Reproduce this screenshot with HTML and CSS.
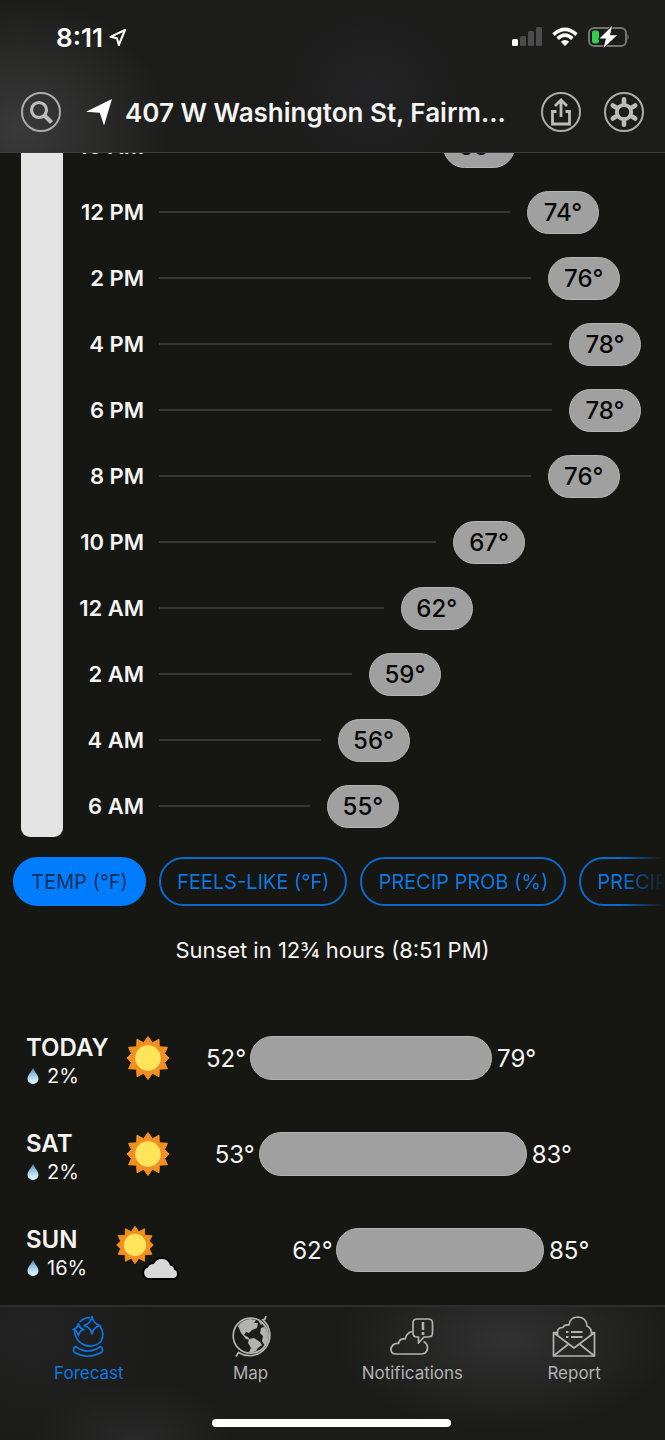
FILE: index.html
```html
<!DOCTYPE html>
<html lang="en">
<head>
<meta charset="utf-8">
<meta name="viewport" content="width=device-width, initial-scale=1">
<title>Forecast</title>
<link rel="stylesheet" href="styles.css">
</head>
<body>
<svg class="defs" aria-hidden="true">
  <defs>
    <linearGradient id="drop-fill" x1="0" y1="0" x2="0" y2="1"><stop offset="0" stop-color="#4f86b4"/><stop offset=".5" stop-color="#a5d2ee"/><stop offset="1" stop-color="#eefaff"/></linearGradient>
    <symbol id="sun" viewBox="0 0 44 46">
      <path fill="#f28f20" stroke="#f28f20" stroke-width="1" stroke-linejoin="round" d="M22 1.500 L26.400 7.800 L33 4.200 L33.300 11.800 L41.500 12.300 L38.500 18.500 L43 23 L38.500 27.500 L41.500 33.700 L33.300 34.200 L33 41.800 L26.400 38.200 L22 44.500 L17.600 38.200 L11 41.800 L10.700 34.200 L2.500 33.700 L5.500 27.500 L1 23 L5.500 18.500 L2.500 12.300 L10.700 11.800 L11 4.200 L17.600 7.800 Z"/>
      <circle cx="22" cy="23" r="12.800" fill="#ffe45c"/>
    </symbol>
    <symbol id="drop" viewBox="0 0 14 18">
      <path fill="url(#drop-fill)" d="M7 1C8.500 5 12.500 8 12.500 12A5.500 5 0 0 1 1.500 12C1.500 8 5.500 5 7 1Z"/>
    </symbol>
  </defs>
</svg>

<header class="topbar">
  <div class="status">
    <span class="clock">8:11
      <svg width="18" height="19" viewBox="0 0 18 19" fill="none" stroke="currentColor" stroke-width="2" stroke-linejoin="round"><path d="M16 2L1.500 8.800L8 10.200L9.800 17Z"/></svg>
    </span>
    <span class="indicators">
      <svg width="30" height="20" viewBox="0 0 30 20"><rect x="0" y="12" width="6" height="7" rx="1.500" fill="#fff"/><g fill="#4b4b4b"><rect x="8" y="9" width="6" height="10" rx="1.500"/><rect x="16" y="4" width="6" height="15" rx="1.500"/><rect x="24" y="0" width="6" height="19" rx="1.500"/></g></svg>
      <svg width="26" height="20" viewBox="0 0 26 20"><g fill="none" stroke="#fff" stroke-width="3.600"><path d="M1.500 7.600Q13-2.800 24.500 7.600"/><path d="M5.600 11.600Q13 4.800 20.400 11.600"/></g><path fill="#fff" d="M8.800 14.700Q13 11.200 17.200 14.700L13 19Z"/></svg>
      <svg width="42" height="22" viewBox="0 0 42 22"><rect x="1" y="2" width="37" height="18" rx="5" fill="none" stroke="#747474" stroke-width="2"/><path d="M39.500 8Q42 11 39.500 14Z" fill="#747474"/><rect x="4" y="4.500" width="7" height="13" rx="2.500" fill="#34c94f"/><path d="M24 0L11.500 12.500H18L15.500 22L29 9.200H22Z" fill="#fff" stroke="#1c1c1b" stroke-width="1.500" paint-order="stroke"/></svg>
    </span>
  </div>
  <div class="toolbar">
    <button class="round" aria-label="Search"><svg width="28" height="28" viewBox="0 0 28 28" fill="none" stroke="currentColor"><circle cx="12" cy="12" r="7.500" stroke-width="3.200"/><path stroke-width="4.200" d="M17 17L24.500 24.500"/></svg></button>
    <h1 class="place">
      <svg width="28" height="28" viewBox="0 0 28 28"><path fill="#fff" d="M27 1L1 13.800L14.800 14.800L19 27.500Z"/></svg>
      <span class="address">407 W Washington St, Fairm...</span>
    </h1>
    <div class="actions">
      <button class="round" aria-label="Share"><svg width="28" height="30" viewBox="0 0 28 30" fill="none" stroke="currentColor" stroke-width="2.800"><path d="M9.500 14.500H5.500V27H22.500V14.500H18.500"/><path d="M14 20V3M8 9L14 3L20 9"/></svg></button>
      <button class="round" aria-label="Settings"><svg width="30" height="32" viewBox="-15 -16 30 32" fill="none" stroke="currentColor"><circle r="7.200" stroke-width="3.800"/><path stroke-width="4.600" stroke-linecap="round" d="M0-9.500V-12.800M0 9.500V12.800M8-4.600L11.200-6.500M-8-4.600L-11.200-6.500M8 4.600L11.200 6.500M-8 4.600L-11.200 6.500"/></svg></button>
    </div>
  </div>
</header>

<main class="content">
  <section class="timeline" aria-label="Hourly temperature">
    <div class="sky"></div>
    <ol class="hours">
      <li class="hour"><span class="when">10 AM</span><span class="track"><i class="line" style="--t:.679"></i><b class="pill">66°</b></span></li>
      <li class="hour"><span class="when">12 PM</span><span class="track"><i class="line" style="--t:.893"></i><b class="pill">74°</b></span></li>
      <li class="hour"><span class="when">2 PM</span><span class="track"><i class="line" style="--t:.946"></i><b class="pill">76°</b></span></li>
      <li class="hour"><span class="when">4 PM</span><span class="track"><i class="line" style="--t:1"></i><b class="pill">78°</b></span></li>
      <li class="hour"><span class="when">6 PM</span><span class="track"><i class="line" style="--t:1"></i><b class="pill">78°</b></span></li>
      <li class="hour"><span class="when">8 PM</span><span class="track"><i class="line" style="--t:.946"></i><b class="pill">76°</b></span></li>
      <li class="hour"><span class="when">10 PM</span><span class="track"><i class="line" style="--t:.705"></i><b class="pill">67°</b></span></li>
      <li class="hour"><span class="when">12 AM</span><span class="track"><i class="line" style="--t:.572"></i><b class="pill">62°</b></span></li>
      <li class="hour"><span class="when">2 AM</span><span class="track"><i class="line" style="--t:.491"></i><b class="pill">59°</b></span></li>
      <li class="hour"><span class="when">4 AM</span><span class="track"><i class="line" style="--t:.411"></i><b class="pill">56°</b></span></li>
      <li class="hour"><span class="when">6 AM</span><span class="track"><i class="line" style="--t:.384"></i><b class="pill">55°</b></span></li>
    </ol>
  </section>

  <div class="chips">
    <button class="chip selected" aria-pressed="true">TEMP (°F)</button>
    <button class="chip">FEELS-LIKE (°F)</button>
    <button class="chip">PRECIP PROB (%)</button>
    <button class="chip">PRECIP RATE (IN/HR)</button>
  </div>

  <p class="sunset">Sunset in 12¾ hours (8:51 PM)</p>

  <ul class="days">
    <li class="day">
      <div class="info"><h2 class="name">TODAY</h2><span class="rain"><svg width="14" height="18"><use href="#drop"/></svg>2%</span></div>
      <svg class="weather" viewBox="0 0 68 60"><use href="#sun" x="12" y="7" width="44" height="46"/></svg>
      <div class="range"><span class="low" style="margin-left:0%">52°</span><i class="bar" style="width:55.9%"></i><span>79°</span></div>
    </li>
    <li class="day">
      <div class="info"><h2 class="name">SAT</h2><span class="rain"><svg width="14" height="18"><use href="#drop"/></svg>2%</span></div>
      <svg class="weather" viewBox="0 0 68 60"><use href="#sun" x="12" y="7" width="44" height="46"/></svg>
      <div class="range"><span class="low" style="margin-left:2%">53°</span><i class="bar" style="width:61.9%"></i><span>83°</span></div>
    </li>
    <li class="day">
      <div class="info"><h2 class="name">SUN</h2><span class="rain"><svg width="14" height="18"><use href="#drop"/></svg>16%</span></div>
      <svg class="weather" viewBox="0 0 68 60"><use href="#sun" x="1" y="5" width="40" height="40"/><path fill="#d8d8d8" stroke="#000" stroke-width="4" paint-order="stroke" d="M34 58A5.500 5.500 0 0 1 34 47.500A6 6 0 0 1 40 44A8.500 8.500 0 0 1 56 45.500Q60 46 60 49.500A4.500 4.500 0 0 1 60 58Z"/></svg>
      <div class="range"><span class="low" style="margin-left:19.900%">62°</span><i class="bar" style="width:48%"></i><span>85°</span></div>
    </li>
  </ul>
</main>

<footer class="bottom">
  <nav class="tabs">
    <a class="tab active" href="#forecast" aria-current="page">
      <svg width="44" height="44" viewBox="0 0 44 44" fill="none" stroke="currentColor" stroke-width="1.700" stroke-linejoin="round"><path d="M12.500 7Q17 2.500 23 2.600M33 11A15.500 15.500 0 0 1 34 26.500A15.500 15.500 0 0 1 7.500 15.500"/><path d="M25 1.500Q26 8.500 33 10.500Q26 12.500 25 19Q24 12.500 17 10.500Q24 8.500 25 1.500Z"/><path d="M11.500 8.500Q12.500 13.500 17 14.500Q12.500 15.500 11.500 20.500Q10.500 15.500 6 14.500Q10.500 13.500 11.500 8.500Z"/><path d="M8.500 31.500Q5.500 33 7 37Q20.500 45.500 35 37Q36.500 33 33.500 31.500Q21 40.500 8.500 31.500Z"/></svg>
      <span>Forecast</span>
    </a>
    <a class="tab" href="#map">
      <svg width="44" height="44" viewBox="0 0 44 44" fill="none" stroke="currentColor" stroke-width="1.700"><circle cx="21.700" cy="20.700" r="17.500"/><path d="M37 1L36 4L34 4.800A20.500 20.500 0 0 1 9.500 37.500L7 41.500"/><g fill="currentColor" stroke="none"><path d="M9 11Q13 5 21 4L27 5L25 8L29 8L28 13L23 15L20 18L17 17L15 20L19 22L21 25L17 24L12 18Z"/><path d="M20 24L25 23L31 27L33 30L29 33L27 36L22 38L20 37L22 33L19 28Z"/><path d="M34 9Q42 20 36 31L33 26L34 21L31 18L32 13L35 12Z"/><path d="M29 5L34 8L32 10Z"/></g></svg>
      <span>Map</span>
    </a>
    <a class="tab" href="#notifications">
      <svg width="44" height="44" viewBox="0 0 44 44" fill="none" stroke="currentColor" stroke-width="1.700" stroke-linejoin="round"><path d="M22 16.500Q16.500 18 15.200 24Q9.500 23 8.500 28.500C4 28 1 31 1 34.500Q1 39 6 39H32Q38 38 37.500 32Q37 28 33.500 26.500"/><path d="M27 4H38Q42.500 4 42.500 8V18Q42.500 22 38 22H34L28.500 28V22H27Q23 22 23 18V8Q23 4 27 4Z"/><path stroke-width="2.600" d="M33 7V15M33 17V20"/></svg>
      <span>Notifications</span>
    </a>
    <a class="tab" href="#report">
      <svg width="44" height="44" viewBox="0 0 44 44" fill="none" stroke="currentColor" stroke-width="1.700" stroke-linejoin="round"><path d="M6 17.500H1.500V41H42.500V17.500H39M1.500 17.500L22 33L42.500 17.500M1.500 41L16.500 29M42.500 41L27.500 29"/><path d="M5.500 20V17Q5.500 12.500 11 12.500Q12 9.500 17 10Q18 2 26 2Q34.500 2.500 35 11Q40 13 39.500 20"/><path stroke-width="2" d="M19 17H30.500M19 22H30.500M14 17H16.500M14 22H16.500"/></svg>
      <span>Report</span>
    </a>
  </nav>
  <div class="home"></div>
</footer>
</body>
</html>
```

FILE: styles.css
```css
* { box-sizing: border-box; }

body {
  margin: 0;
  min-height: 100vh;
  display: flex;
  flex-direction: column;
  background: #161712;
  color: #f4f4f2;
  font-family: Inter, "Liberation Sans", sans-serif;
  font-size: 22px;
}

svg { display: block; flex: none; }
ol, ul { list-style: none; margin: 0; padding: 0; }
h1, h2, p { margin: 0; }
button { font: inherit; cursor: pointer; }
.defs { position: absolute; width: 0; height: 0; }

.topbar {
  position: sticky;
  top: 0;
  z-index: 2;
  padding: 20px 21px 20px;
  border-bottom: 1px solid #3d3d3c;
  background:
    radial-gradient(ellipse 150px 130px at 3% 85%, #3a3a3a, transparent),
    radial-gradient(ellipse 100px 90px at 56% 60%, #242426, transparent),
    #1c1c1b;
}

.status {
  display: flex;
  align-items: center;
  justify-content: space-between;
  height: 34px;
  padding: 0 14px 0 35px;
}
.clock { display: flex; align-items: center; gap: 6px; font-size: 26px; font-weight: 600; color: #fff; }
.indicators { display: flex; align-items: center; gap: 10px; }

.toolbar { display: flex; align-items: center; margin-top: 38px; }
.round {
  display: grid;
  place-items: center;
  width: 40px;
  height: 40px;
  padding: 0;
  border: 2px solid #acacac;
  border-radius: 50%;
  background: none;
  color: #bcbcbc;
}
.place { flex: 1; min-width: 0; display: flex; align-items: center; gap: 12px; padding-left: 24px; font-size: 26px; font-weight: 600; }
.address { white-space: nowrap; overflow: hidden; text-overflow: ellipsis; }
.actions { display: flex; gap: 23px; }

.content { flex: 1; overflow: hidden; margin-top: -40px; }

.timeline { display: flex; padding: 0 24px 0 21px; }
.sky { width: 42px; margin-bottom: 2px; border-radius: 0 0 9px 9px; background: #e3e3e3; }
.hours { flex: 1; }
.hour { display: flex; align-items: center; height: 66px; }
.when { width: 81px; text-align: right; font-weight: 600; white-space: nowrap; }
.track { flex: 1; display: flex; align-items: center; margin-left: 15px; }
.line { flex: none; width: calc((100% - 89px) * var(--t)); height: 2px; margin-right: 17px; background: #373834; }
.pill {
  flex: none;
  width: 72px;
  height: 43px;
  border: 1px solid #b4b4b4;
  border-radius: 22px;
  background: #a0a0a0;
  color: #080808;
  font-size: 24px;
  font-weight: 500;
  line-height: 41px;
  text-align: center;
}

.chips {
  display: flex;
  gap: 13px;
  padding: 18px 0 0 13px;
  overflow: hidden;
  -webkit-mask-image: linear-gradient(to right, #000 calc(100% - 45px), transparent);
  mask-image: linear-gradient(to right, #000 calc(100% - 45px), transparent);
}
.chip {
  flex: none;
  height: 49px;
  padding: 0 16px;
  border: 2px solid #0a69cc;
  border-radius: 25px;
  background: none;
  color: #0a78ea;
  font-size: 20px;
}
.chip.selected { border-color: #007dff; background: #007dff; color: #0c2c50; }

.sunset { padding: 30px 16px 0; line-height: 28px; text-align: center; }

.days { padding: 46px 26px 6px; }
.day { display: flex; align-items: center; height: 96px; }
.info { width: 88px; padding-top: 8px; }
.name { font-size: 24px; font-weight: 600; line-height: 28px; white-space: nowrap; }
.rain { display: flex; align-items: center; gap: 7px; font-size: 20px; line-height: 28px; }
.weather { width: 68px; height: 60px; }
.range { flex: 1; display: flex; align-items: center; gap: 5px; margin-left: 24px; font-size: 24px; }
.low { width: 39px; text-align: right; flex: none; }
.bar { flex: none; height: 44px; border: 1px solid #b0b0b0; border-radius: 22px; background: #a0a0a0; }

.bottom {
  position: sticky;
  bottom: 0;
  z-index: 2;
  padding: 8px 10px 13px 8px;
  border-top: 2px solid #2e2e2d;
  background:
    radial-gradient(ellipse 170px 90px at 76% 25%, #313131, transparent),
    radial-gradient(ellipse 100px 60px at 20% 100%, #292929, transparent),
    radial-gradient(ellipse 120px 110px at 5% 20%, #232323, transparent),
    #1b1b1a;
}
.tabs { display: flex; }
.tab { flex: 1; display: flex; flex-direction: column; align-items: center; gap: 3px; color: #b2b2b1; font-size: 17px; line-height: 22px; text-decoration: none; }
.tab.active { color: #0b78e3; }
.home { width: 37%; height: 8px; margin: 35px auto 0; border-radius: 4px; background: #fff; }
```
